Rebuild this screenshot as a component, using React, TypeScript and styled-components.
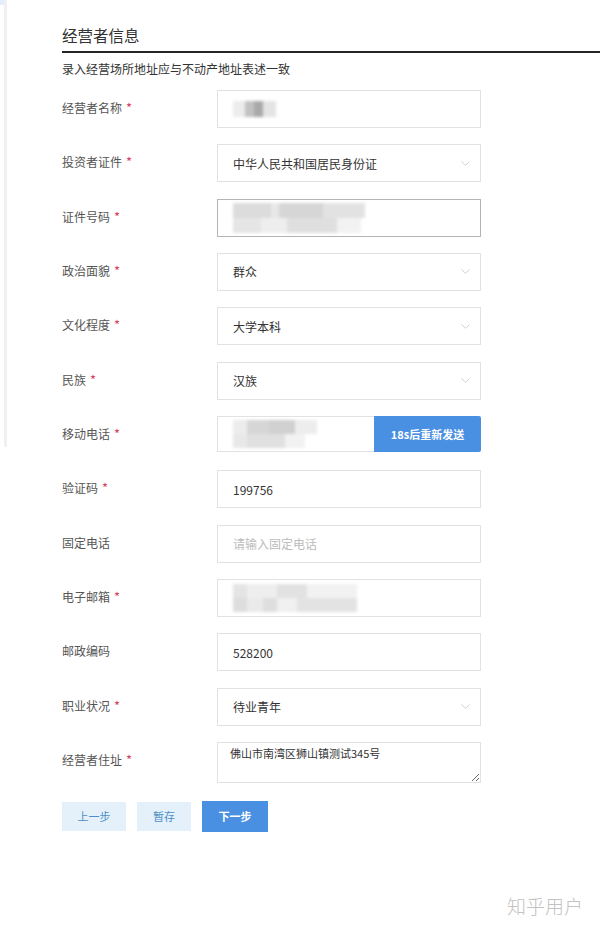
import React from "react";
import styled, { createGlobalStyle } from "styled-components";

const Global = createGlobalStyle`
  html, body { margin: 0; padding: 0; background: #fff; }
  body {
    font-family: "Noto Sans CJK SC", "Noto Sans", "Liberation Sans", sans-serif;
    color: #333;
  }
`;

const Page = styled.div`
  display: flex;
  align-items: flex-start;
  width: 600px;
  height: 927px;
  overflow: hidden;
  background: #fff;
`;

const SideEdge = styled.div`
  flex: 0 0 4px;
  height: 447px;
  border-right: 3px solid #eef0f3;
  background: linear-gradient(#e4eefa 0 5px, #fff 5px);
`;

const Main = styled.div`
  flex: 1;
  padding-left: 55px;
  display: flex;
  flex-direction: column;
`;

const Heading = styled.h2`
  margin: 0;
  padding: 25px 0 6px;
  font-size: 15.5px;
  line-height: 20px;
  font-weight: 400;
  color: #333;
  border-bottom: 2px solid #262626;
`;

const Subtitle = styled.p`
  margin: 7px 0 0;
  font-size: 12px;
  line-height: 18px;
  color: #333;
`;

const Form = styled.div`
  margin-top: 12px;
  display: flex;
  flex-direction: column;
  gap: 16.33px;
`;

const Row = styled.div`
  display: flex;
  align-items: flex-start;
`;

const Label = styled.div`
  width: 155px;
  padding-top: 9px;
  font-size: 12px;
  line-height: 18px;
  color: #555;
  display: flex;
  align-items: center;
`;

const Star = styled.span`
  margin-left: 4px;
  font-size: 13px;
  color: #d8435c;
  line-height: 18px;
`;

const Field = styled.div<{ $dark?: boolean }>`
  box-sizing: border-box;
  width: 264px;
  height: 38px;
  border: 1px solid ${(p) => (p.$dark ? "#b4b4b4" : "#e2e2e2")};
  display: flex;
  align-items: center;
  justify-content: space-between;
  padding: 0 10px 0 15px;
  font-size: 12px;
  color: #333;
`;

const Placeholder = styled.span`
  color: #bcbcbc;
`;

const Chevron = () => (
  <svg width="9" height="5" viewBox="0 0 9 5" fill="none">
    <path d="M0.5 0.5 L4.5 4.3 L8.5 0.5" stroke="#cfcfcf" strokeWidth="1" />
  </svg>
);

const PhoneGroup = styled.div`
  width: 264px;
  height: 36px;
  margin-bottom: 2px;
  display: flex;
`;

const PhoneInput = styled.div`
  box-sizing: border-box;
  flex: 1;
  border: 1px solid #e2e2e2;
  border-right: none;
  display: flex;
  align-items: center;
  padding-left: 15px;
`;

const SendButton = styled.div`
  flex: 0 0 107px;
  background: #4a90e2;
  border-radius: 0 2px 2px 0;
  color: #fff;
  font-size: 11px;
  font-weight: 700;
  display: flex;
  align-items: center;
  justify-content: center;
`;

const Area = styled.textarea`
  box-sizing: border-box;
  width: 264px;
  height: 41px;
  border: 1px solid #e2e2e2;
  padding: 3px 12px;
  margin: 0;
  font-family: "Noto Sans CJK SC", "Noto Sans", sans-serif;
  font-size: 11px;
  line-height: 15px;
  color: #333;
  resize: vertical;
  outline: none;
`;

const SmudgeBox = styled.div<{ $h: number }>`
  display: flex;
  flex-direction: column;
  filter: blur(1.8px);
  height: ${(p) => p.$h}px;
`;

const SmudgeLine = styled.div`
  display: flex;
  flex: 1;
`;

const Piece = styled.span<{ $w: number; $c: string }>`
  display: block;
  width: ${(p) => p.$w}px;
  background: ${(p) => p.$c};
`;

type Part = [number, string];

const Smudge = ({ h, lines }: { h: number; lines: Part[][] }) => (
  <SmudgeBox $h={h}>
    {lines.map((line, i) => (
      <SmudgeLine key={i}>
        {line.map(([w, c], j) => (
          <Piece key={j} $w={w} $c={c} />
        ))}
      </SmudgeLine>
    ))}
  </SmudgeBox>
);

const Actions = styled.div`
  margin-top: 18px;
  display: flex;
  align-items: center;
  gap: 11px;
`;

const Btn = styled.div<{ $primary?: boolean; $w: number }>`
  width: ${(p) => p.$w}px;
  height: ${(p) => (p.$primary ? 31 : 29)}px;
  background: ${(p) => (p.$primary ? "#4a90e2" : "#e4f1fb")};
  color: ${(p) => (p.$primary ? "#fff" : "#4f8fc6")};
  font-size: 11px;
  font-weight: ${(p) => (p.$primary ? 700 : 400)};
  display: flex;
  align-items: center;
  justify-content: center;
`;

const Footer = styled.div`
  margin-top: 64px;
  display: flex;
  justify-content: flex-end;
  padding-right: 17px;
`;

const Watermark = styled.span`
  font-size: 19px;
  line-height: 20px;
  color: #c2c2c2;
  font-weight: 300;
`;

export default function App() {
  return (
    <Page>
      <Global />
      <SideEdge />
      <Main>
        <Heading>经营者信息</Heading>
        <Subtitle>录入经营场所地址应与不动产地址表述一致</Subtitle>
        <Form>
          <Row>
            <Label>
              经营者名称<Star>*</Star>
            </Label>
            <Field>
              <Smudge
                h={16}
                lines={[
                  [
                    [12, "#ececec"],
                    [9, "#c2c2c2"],
                    [9, "#a9a9a9"],
                    [13, "#e4e4e4"],
                  ],
                ]}
              />
            </Field>
          </Row>
          <Row>
            <Label>
              投资者证件<Star>*</Star>
            </Label>
            <Field>
              中华人民共和国居民身份证
              <Chevron />
            </Field>
          </Row>
          <Row>
            <Label>
              证件号码<Star>*</Star>
            </Label>
            <Field $dark>
              <Smudge
                h={30}
                lines={[
                  [
                    [38, "#dcdcdc"],
                    [8, "#e8e8e8"],
                    [44, "#d6d6d6"],
                    [42, "#e2e2e2"],
                  ],
                  [
                    [28, "#e5e5e5"],
                    [26, "#eeeeee"],
                    [50, "#dfdfdf"],
                    [24, "#f2f2f2"],
                  ],
                ]}
              />
            </Field>
          </Row>
          <Row>
            <Label>
              政治面貌<Star>*</Star>
            </Label>
            <Field>
              群众
              <Chevron />
            </Field>
          </Row>
          <Row>
            <Label>
              文化程度<Star>*</Star>
            </Label>
            <Field>
              大学本科
              <Chevron />
            </Field>
          </Row>
          <Row>
            <Label>
              民族<Star>*</Star>
            </Label>
            <Field>
              汉族
              <Chevron />
            </Field>
          </Row>
          <Row>
            <Label>
              移动电话<Star>*</Star>
            </Label>
            <PhoneGroup>
              <PhoneInput>
                <Smudge
                  h={28}
                  lines={[
                    [
                      [14, "#ececec"],
                      [22, "#d6d6d6"],
                      [26, "#d0d0d0"],
                      [22, "#ededed"],
                    ],
                    [
                      [14, "#e8e8e8"],
                      [38, "#e0e0e0"],
                      [20, "#f2f2f2"],
                    ],
                  ]}
                />
              </PhoneInput>
              <SendButton>18s后重新发送</SendButton>
            </PhoneGroup>
          </Row>
          <Row>
            <Label>
              验证码<Star>*</Star>
            </Label>
            <Field>199756</Field>
          </Row>
          <Row>
            <Label>固定电话</Label>
            <Field>
              <Placeholder>请输入固定电话</Placeholder>
            </Field>
          </Row>
          <Row>
            <Label>
              电子邮箱<Star>*</Star>
            </Label>
            <Field>
              <Smudge
                h={28}
                lines={[
                  [
                    [14, "#e4e4e4"],
                    [30, "#eeeeee"],
                    [30, "#e2e2e2"],
                    [50, "#f2f2f2"],
                  ],
                  [
                    [14, "#dddddd"],
                    [16, "#eaeaea"],
                    [14, "#dedede"],
                    [20, "#f0f0f0"],
                    [60, "#e3e3e3"],
                  ],
                ]}
              />
            </Field>
          </Row>
          <Row>
            <Label>邮政编码</Label>
            <Field>528200</Field>
          </Row>
          <Row>
            <Label>
              职业状况<Star>*</Star>
            </Label>
            <Field>
              待业青年
              <Chevron />
            </Field>
          </Row>
          <Row>
            <Label>
              经营者住址<Star>*</Star>
            </Label>
            <Area readOnly defaultValue="佛山市南湾区狮山镇测试345号" />
          </Row>
        </Form>
        <Actions>
          <Btn $w={64}>上一步</Btn>
          <Btn $w={54}>暂存</Btn>
          <Btn $w={66} $primary>
            下一步
          </Btn>
        </Actions>
        <Footer>
          <Watermark>知乎用户</Watermark>
        </Footer>
      </Main>
    </Page>
  );
}
